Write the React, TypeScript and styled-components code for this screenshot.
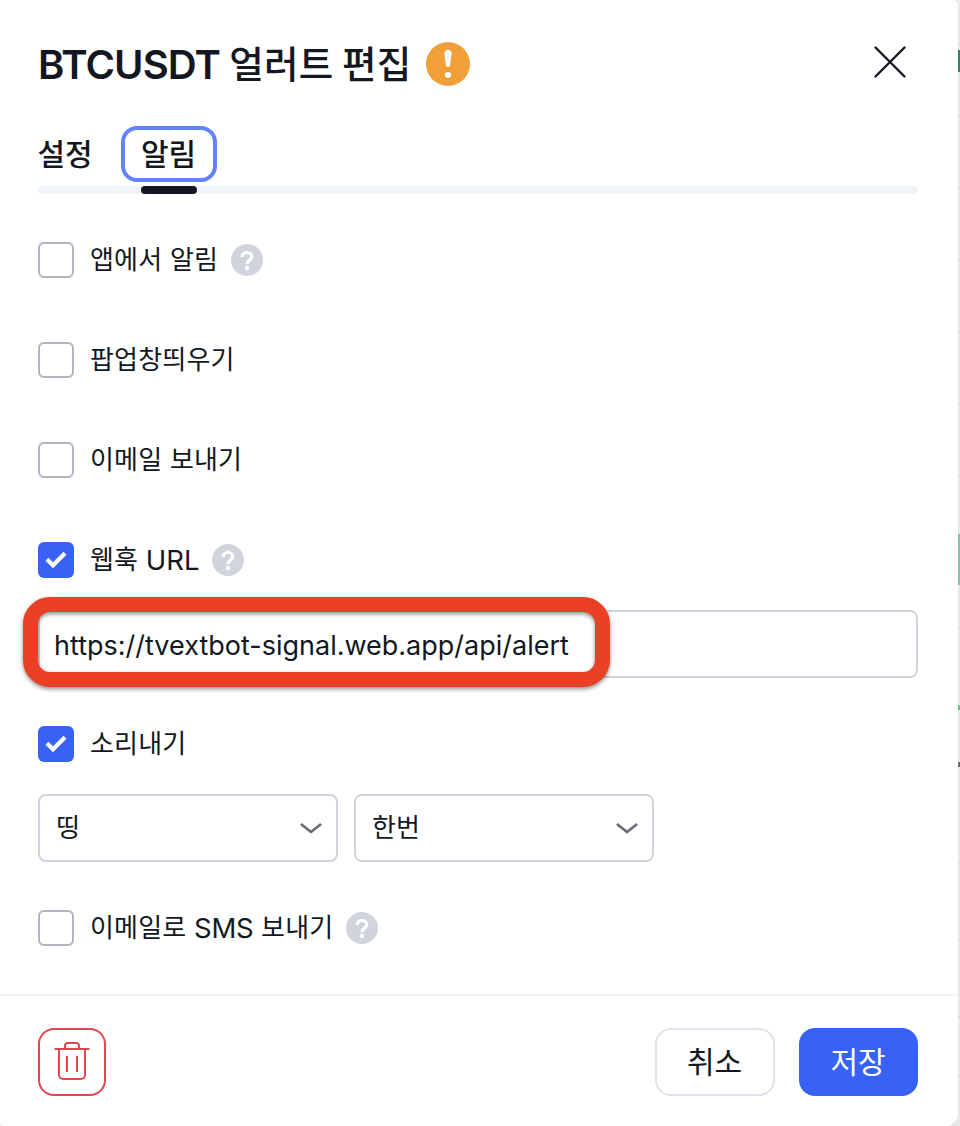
import React from "react";
import styled, { createGlobalStyle } from "styled-components";

const ink = "#131722";

const GlobalStyle = createGlobalStyle`
  * { box-sizing: border-box; }
  body { margin: 0; background: #ededed; overflow: hidden; }
  button, input { font: inherit; color: inherit; }
`;

const Screen = styled.div`
  display: grid;
  width: 960px;
  height: 1126px;
  overflow: hidden;
  font-family: Inter, "Noto Sans CJK KR", sans-serif;
  color: ${ink};
`;

const ChartBackdrop = styled.svg`
  grid-area: 1 / 1;
  justify-self: end;
  display: block;
`;

const Dialog = styled.section`
  grid-area: 1 / 1;
  position: relative;
  display: flex;
  flex-direction: column;
  width: 958px;
  height: 1126px;
  background: #fff;
  border-radius: 0 6px 12px 4px;
  box-shadow: 0 4px 8px rgba(0, 0, 0, 0.06);
`;

const Header = styled.header`
  display: flex;
  align-items: center;
  height: 126px;
  padding: 2px 50px 0 38px;
`;

const Title = styled.h1`
  display: flex;
  margin: 0 15px 0 0;
  font-size: 40px;
  line-height: 48px;
  font-weight: 600;
  white-space: pre;
`;

const Hangul = styled.span<{ $size: number; $gap?: number; $space?: number; $weight?: number; $rise?: number }>`
  font-family: "Noto Sans CJK KR", sans-serif;
  font-size: ${(p) => p.$size}px;
  font-weight: ${(p) => p.$weight ?? 400};
  letter-spacing: ${(p) => p.$gap ?? 0}px;
  word-spacing: ${(p) => p.$space ?? 0}px;
  line-height: inherit;
  margin-top: ${(p) => -(p.$rise ?? 0)}px;
  margin-bottom: ${(p) => p.$rise ?? 0}px;
`;

const Latin = styled.span<{ $gap?: number; $drop?: number }>`
  letter-spacing: ${(p) => p.$gap ?? 0}px;
  margin-top: ${(p) => p.$drop ?? 0}px;
  margin-bottom: ${(p) => -(p.$drop ?? 0)}px;
`;

const CloseButton = styled.button`
  display: flex;
  margin: 0 0 4px auto;
  padding: 0;
  border: 0;
  background: none;
`;

const Tabs = styled.nav`
  display: flex;
  gap: 8px;
  height: 56px;
  padding-left: 18px;
`;

const Tab = styled.button<{ $focused?: boolean }>`
  display: flex;
  align-items: center;
  justify-content: center;
  width: ${(p) => (p.$focused ? 96 : 95)}px;
  padding: 0 1px 0 0;
  line-height: 48px;
  background: none;
  border: 4px solid ${(p) => (p.$focused ? "#6283fb" : "transparent")};
  border-radius: 16px;
`;

const TabTrack = styled.div`
  height: 8px;
  margin: 4px 40px 0 38px;
  border-radius: 4px;
  background: #f0f3fa;
`;

const TabIndicator = styled.div`
  width: 56px;
  height: 8px;
  margin-left: 103px;
  border-radius: 4px;
  background: ${ink};
`;

const Body = styled.div`
  display: flex;
  flex-direction: column;
  flex: 1;
  padding: 48px 40px 0 38px;
`;

const Option = styled.div<{ $after: number }>`
  display: flex;
  align-items: center;
  height: 36px;
  margin-bottom: ${(p) => p.$after}px;
`;

const Box = styled.span<{ $checked?: boolean }>`
  display: flex;
  width: 36px;
  height: 36px;
  flex: none;
  border-radius: 6px;
  border: ${(p) => (p.$checked ? "0" : "2px solid #b2b5be")};
  background: ${(p) => (p.$checked ? "#3861f6" : "#fff")};
`;

const OptionLabel = styled.span`
  display: flex;
  margin: 0 12.5px 0 16px;
  font-size: 27.5px;
  line-height: 36px;
  white-space: pre;
`;

const UrlField = styled.div`
  position: relative;
  height: 68px;
  margin-bottom: 48px;
`;

const UrlInput = styled.input`
  width: 100%;
  height: 68px;
  padding: 2px 14px 0;
  border: 2px solid #d1d4dc;
  border-radius: 8px;
  outline: none;
  font-size: 27px;
`;

const Highlight = styled.div`
  position: absolute;
  left: -15px;
  top: -13px;
  width: 587px;
  height: 90px;
  border: 15px solid #ea4025;
  border-radius: 27px;
  filter: drop-shadow(0 2px 2px rgba(0, 0, 0, 0.45));
  pointer-events: none;
`;

const Selects = styled.div`
  display: flex;
  gap: 16px;
  margin-bottom: 48px;
`;

const Select = styled.button`
  display: flex;
  align-items: center;
  justify-content: space-between;
  width: 300px;
  height: 68px;
  padding: 0 14px 0 16px;
  line-height: 64px;
  border: 2px solid #d1d4dc;
  border-radius: 8px;
  background: #fff;
`;

const Footer = styled.footer`
  display: flex;
  align-items: center;
  gap: 24px;
  height: 132px;
  padding: 2px 40px 0 38px;
  border-top: 2px solid #f0f3fa;
`;

const FooterButton = styled.button<{ $kind: "danger" | "plain" | "primary" }>`
  display: flex;
  align-items: center;
  justify-content: center;
  width: ${(p) => ({ danger: 68, plain: 120, primary: 119 })[p.$kind]}px;
  height: 68px;
  padding: ${(p) => (p.$kind === "danger" ? "0" : "0 1px 0 0")};
  line-height: 60px;
  margin-right: ${(p) => (p.$kind === "danger" ? "auto" : 0)};
  border: 2px solid ${(p) => ({ danger: "#e0484d", plain: "#e0e3eb", primary: "#3861f6" })[p.$kind]};
  border-radius: 16px;
  background: ${(p) => (p.$kind === "primary" ? "#3861f6" : "#fff")};
  color: ${(p) => (p.$kind === "primary" ? "#fff" : ink)};
`;

const Help = () => (
  <svg width="32" height="32" viewBox="0 0 32 32">
    <circle cx="16" cy="16" r="16" fill="#d1d4dc" />
    <path d="M11.3 13c0-2.9 2-4.5 4.700-4.500s4.700 1.700 4.700 4.200c0 3.300-4.700 3.300-4.700 7.500" fill="none" stroke="#fff" strokeWidth="3.200" />
    <circle cx="16" cy="24" r="2.200" fill="#fff" />
  </svg>
);

const Warning = () => (
  <svg width="44" height="44" viewBox="0 0 44 44">
    <circle cx="22" cy="22" r="22" fill="#f19f38" />
    <path d="M18.300 12c0-2.400 1.600-4 3.700-4s3.700 1.600 3.700 4l-1.700 11.200c-.2 1.100-1 1.900-2 1.900s-1.800-.8-2-1.900z" fill="#fff" />
    <circle cx="22" cy="33" r="3" fill="#fff" />
  </svg>
);

const Check = () => (
  <svg width="36" height="36" viewBox="0 0 36 36">
    <path d="M9 17.300l6 6L27 11.200" fill="none" stroke="#fff" strokeWidth="4.200" />
  </svg>
);

const Chevron = () => (
  <svg width="22" height="12" viewBox="0 0 22 12">
    <path d="M.9 2l10.100 8L21.100 2" fill="none" stroke="#6a6d78" strokeWidth="2.700" strokeLinejoin="round" />
  </svg>
);

const Trash = () => (
  <svg width="36" height="40" viewBox="0 0 36 40" fill="none" stroke="#e0484d" strokeWidth="2">
    <path d="M.5 7h35M11 7V4a3 3 0 0 1 3-3h8a3 3 0 0 1 3 3v3M5 7v26a4 4 0 0 0 4 4h18a4 4 0 0 0 4-4V7M13 14v16M23 14v16" />
  </svg>
);

const label = { $size: 26, $gap: 0.2, $space: 1.5, $rise: 2 };

export default function App() {
  return (
    <Screen>
      <GlobalStyle />
      <ChartBackdrop width="14" height="1126" viewBox="0 0 14 1126">
        <rect width="14" height="1126" fill="#ededed" />
        <path d="M0 43h14M0 116h14M0 188h14M0 260h14M0 332h14M0 405h14M0 477h14M0 549h14M0 629h14M0 706h14M0 784h14M0 862h14M0 939h14M0 1017h14M0 1076h14" stroke="#dddfe1" strokeWidth="2" />
        <path d="M12 50h2v22h-2z" fill="#2f8870" />
        <path d="M12 534h2v51h-2z" fill="#8fbfb5" />
        <path d="M12 705h2v5h-2z" fill="#5fd07c" />
        <path d="M12 762h2v5h-2z" fill="#6a6d78" />
      </ChartBackdrop>
      <Dialog>
        <Header>
          <Title>
            <Latin $gap={-0.87} $drop={1}>BTCUSDT </Latin>
            <Hangul $size={37.5} $gap={0.2} $weight={500} $rise={2}>얼러트 편집</Hangul>
          </Title>
          <Warning />
          <CloseButton aria-label="닫기">
            <svg width="36" height="36" viewBox="0 0 36 36">
              <path d="M3.500 3.500l29 29M32.500 3.500l-29 29" stroke={ink} strokeWidth="2.400" strokeLinecap="round" />
            </svg>
          </CloseButton>
        </Header>
        <Tabs>
          <Tab><Hangul $size={30} $weight={500} $rise={2}>설정</Hangul></Tab>
          <Tab $focused><Hangul $size={30} $weight={500} $rise={2}>알림</Hangul></Tab>
        </Tabs>
        <TabTrack><TabIndicator /></TabTrack>
        <Body>
          <Option $after={64}>
            <Box />
            <OptionLabel><Hangul {...label}>앱에서 알림</Hangul></OptionLabel>
            <Help />
          </Option>
          <Option $after={64}>
            <Box />
            <OptionLabel><Hangul {...label}>팝업창띄우기</Hangul></OptionLabel>
          </Option>
          <Option $after={64}>
            <Box />
            <OptionLabel><Hangul {...label}>이메일 보내기</Hangul></OptionLabel>
          </Option>
          <Option $after={32}>
            <Box $checked><Check /></Box>
            <OptionLabel><Hangul {...label}>웹훅 </Hangul><Latin>URL</Latin></OptionLabel>
            <Help />
          </Option>
          <UrlField>
            <UrlInput defaultValue="https://tvextbot-signal.web.app/api/alert" />
            <Highlight />
          </UrlField>
          <Option $after={32}>
            <Box $checked><Check /></Box>
            <OptionLabel><Hangul {...label}>소리내기</Hangul></OptionLabel>
          </Option>
          <Selects>
            <Select><Hangul {...label}>띵</Hangul><Chevron /></Select>
            <Select><Hangul {...label}>한번</Hangul><Chevron /></Select>
          </Selects>
          <Option $after={0}>
            <Box />
            <OptionLabel><Hangul {...label}>이메일로 </Hangul><Latin $gap={-0.2}>SMS</Latin><Hangul {...label}> 보내기</Hangul></OptionLabel>
            <Help />
          </Option>
        </Body>
        <Footer>
          <FooterButton $kind="danger" aria-label="삭제"><Trash /></FooterButton>
          <FooterButton $kind="plain"><Hangul $size={30} $rise={2}>취소</Hangul></FooterButton>
          <FooterButton $kind="primary"><Hangul $size={30} $rise={2}>저장</Hangul></FooterButton>
        </Footer>
      </Dialog>
    </Screen>
  );
}
